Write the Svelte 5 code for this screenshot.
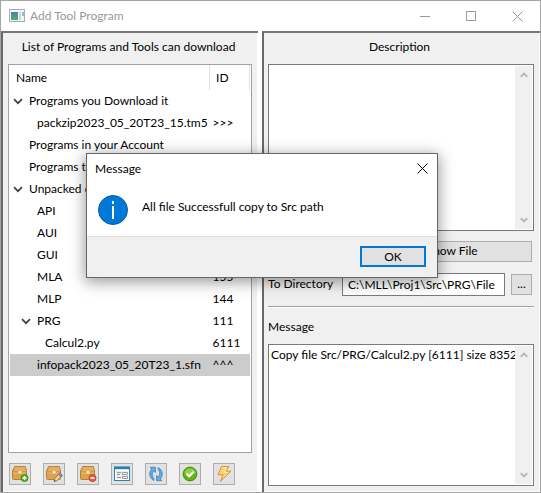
<script>
  const rows = [
    { name: 'Programs you Download it', id: '', level: 0, open: true },
    { name: 'packzip2023_05_20T23_15.tm5', id: '>>>', level: 1 },
    { name: 'Programs in your Account', id: '', level: 0 },
    { name: 'Programs to', id: '', level: 0 },
    { name: 'Unpacked on', id: '', level: 0, open: true },
    { name: 'API', id: '', level: 1 },
    { name: 'AUI', id: '', level: 1 },
    { name: 'GUI', id: '', level: 1 },
    { name: 'MLA', id: '155', level: 1 },
    { name: 'MLP', id: '144', level: 1 },
    { name: 'PRG', id: '111', level: 1, open: true },
    { name: 'Calcul2.py', id: '6111', level: 2 },
    { name: 'infopack2023_05_20T23_1.sfn', id: '^^^', level: 1, selected: true }
  ];
  const tools = ['add', 'edit', 'remove', 'form', 'refresh', 'accept', 'run'];
  const titles = {
    add: 'Add package', edit: 'Edit package', remove: 'Remove package', form: 'Properties',
    refresh: 'Refresh', accept: 'Accept', run: 'Run'
  };
  let description = $state('');
  let log = $state('Copy file Src/PRG/Calcul2.py [6111] size 8352');
  let directory = $state('C:\\MLL\\Proj1\\Src\\PRG\\File');
</script>

{#snippet scrollbar()}
  <div class="scroll" aria-hidden="true">
    <svg width="8" height="6" viewBox="0 0 8 6"><path d="M.8 4.8 4 1.6l3.2 3.2" /></svg>
    <svg width="8" height="6" viewBox="0 0 8 6"><path d="M.8 1.2 4 4.4l3.2-3.2" /></svg>
  </div>
{/snippet}

{#snippet box()}
  <path d="M3.6 1.5h10.8l1.1 4.6v7.4q0 1-1 1H2.5q-1 0-1-1V6.1z" fill="#dba34b" stroke="#b98036" />
  <path d="M4 2h10l1 4.5H3z" fill="#e2b064" />
  <path d="M2 7h13" stroke="#c08238" stroke-width=".8" />
  <path d="M2 8h13" stroke="#efc684" stroke-width=".8" />
  <path d="M7.5 6h3v2.5h-3z" fill="#fae5b5" />
{/snippet}

<main class="window">
  <header class="titlebar">
    <svg class="appicon" width="16" height="14" viewBox="0 0 16 14">
      <defs>
        <linearGradient id="pane" x1="0" y1="0" x2="0" y2="1">
          <stop offset="0" stop-color="#4a7fa8" /><stop offset="1" stop-color="#4fae6a" />
        </linearGradient>
      </defs>
      <rect x=".5" y=".5" width="15" height="12" fill="#f2f4f6" stroke="#a3adb5" />
      <rect x="2" y="3" width="7" height="8" fill="url(#pane)" />
      <rect x="10" y="3" width="2" height="8" fill="#c8d6df" />
      <rect x="13" y="3" width="2" height="4" fill="#9cc0ae" />
    </svg>
    <h1>Add Tool Program</h1>
    <div class="caption">
      <button aria-label="Minimize"><svg width="11" height="11" viewBox="0 0 11 11"><path d="M0 5.5h10" /></svg></button>
      <button aria-label="Maximize"><svg width="11" height="11" viewBox="0 0 11 11"><path d="M.5.5h9v9h-9z" /></svg></button>
      <button aria-label="Close"><svg width="11" height="11" viewBox="0 0 11 11"><path d="m.5.5 10 10m0-10-10 10" /></svg></button>
    </div>
  </header>

  <div class="panels">
    <section class="panel left">
      <h2>List of Programs and Tools can download</h2>
      <div class="tree">
        <table>
          <thead>
            <tr><th class="name">Name</th><th class="id">ID</th></tr>
          </thead>
          <tbody>
            {#each rows as row}
              <tr class:selected={row.selected}>
                <td>
                  <span class="node level{row.level}">
                    <span class="toggle">
                      {#if row.open}
                        <svg width="10" height="7" viewBox="0 0 10 7"><path d="m1 1.2 4 4 4-4" /></svg>
                      {/if}
                    </span>{row.name}
                  </span>
                </td>
                <td>{row.id}</td>
              </tr>
            {/each}
          </tbody>
        </table>
      </div>
      <div class="toolbar">
        {#each tools as tool}
          <button class="tool" aria-label={titles[tool]}>
            <svg width="18" height="18" viewBox="0 0 18 18" fill="none">
              {#if tool === 'add'}
                {@render box()}
                <circle cx="13.5" cy="13" r="3.5" fill="#5db51f" stroke="#3d8a12" />
                <path d="M13.5 11v4M11.5 13h4" stroke="#fff" stroke-width="1.3" />
              {:else if tool === 'edit'}
                {@render box()}
                <path d="m9 16.5.8-3.3 5-5.2 2.5 2.4-5.1 5.3z" fill="#f1cf7c" stroke="#8d6a4a" stroke-width=".8" />
                <path d="m13.4 9.4 1.4-1.4 2.5 2.4-1.4 1.5z" fill="#8c8fd0" stroke="#6469a8" stroke-width=".8" />
                <path d="m9 16.5.5-1.8 1.3 1.3z" fill="#444" />
              {:else if tool === 'remove'}
                {@render box()}
                <circle cx="13.5" cy="13" r="3.5" fill="#ea5a3f" stroke="#c8432f" />
                <path d="M11.5 13h4" stroke="#fff" stroke-width="1.6" />
              {:else if tool === 'form'}
                <rect x="1.5" y="2" width="15" height="13.5" fill="#fff" stroke="#2b83b5" />
                <path d="M1 3h16" stroke="#2182b8" stroke-width="2.4" />
                <rect x="3" y="6" width="12" height="8" fill="#ececec" />
                <path d="M4 7.5h4M4 9.5h3M4 12.5h4" stroke="#999" />
                <path d="M9.5 7.5h5v2h-5zm0 4h5v2h-5z" fill="#fff" stroke="#999" />
              {:else if tool === 'refresh'}
                <path d="M6.8 15.5C3.8 14 2.4 11 2.8 8c.2-1.8 1-3.1 2-4L3 2.3h5.4v5.2L6.7 5.8c-2 2.5-1.8 5.3.1 7.4z" fill="#65aee0" stroke="#357fb9" stroke-width=".8" />
                <path d="M11.2 2.5c3 1.5 4.4 4.5 4 7.5-.2 1.8-1 3.1-2 4l1.8 1.7H9.6v-5.2l1.7 1.7c2-2.5 1.8-5.3-.1-7.4z" fill="#65aee0" stroke="#357fb9" stroke-width=".8" />
              {:else if tool === 'accept'}
                <circle cx="9" cy="9" r="6.9" fill="#62b515" stroke="#438d10" />
                <path d="M3.4 8.2a5.7 5.7 0 0 1 11.2 0q-5.5 2-11.2 0z" fill="#8ed044" />
                <path d="m5.5 8.6 2.8 2.7 4.4-4.5" stroke="#fff" stroke-width="2.2" />
              {:else}
                <path d="M6.5 1.5h7.2L11 6.2h4.8L5.5 16.5 8 9.8H3z" fill="#fbd46e" stroke="#e0913a" />
                <path d="M7.5 2.8h4.2L9 7.3h3.5" stroke="#fff0b8" />
              {/if}
            </svg>
          </button>
        {/each}
      </div>
    </section>

    <section class="panel right">
      <h2><label for="description">Description</label></h2>
      <div class="field description">
        <textarea id="description" bind:value={description}></textarea>
        {@render scrollbar()}
      </div>
      <button class="push show">Show File</button>
      <div class="directory">
        <label for="directory">To Directory</label>
        <input id="directory" type="text" bind:value={directory} />
        <button class="push browse" aria-label="Browse">...</button>
      </div>
      <hr />
      <label class="caption-label" for="log">Message</label>
      <div class="field log">
        <textarea id="log" bind:value={log}></textarea>
        {@render scrollbar()}
      </div>
    </section>
  </div>

  <div class="dialog" role="dialog" aria-labelledby="dialog-title">
    <div class="dialog-top">
      <h2 id="dialog-title">Message</h2>
      <button aria-label="Close message"><svg width="11" height="11" viewBox="0 0 11 11"><path d="m.5.5 10 10m0-10-10 10" /></svg></button>
    </div>
    <div class="dialog-body">
      <svg width="30" height="30" viewBox="0 0 30 30">
        <circle cx="15" cy="15" r="14.5" fill="#0078d7" stroke="#0a5ba3" />
        <path d="M14 6h2v3h-2zM14 11h2v13h-2z" fill="#fff" />
      </svg>
      <p>All file Successfull copy to Src path</p>
    </div>
    <div class="dialog-foot"><button class="push ok">OK</button></div>
  </div>
</main>

<style>
  :global(body) { margin: 0; }
  .window, .window * { box-sizing: border-box; }
  .window {
    position: relative;
    display: flex;
    flex-direction: column;
    min-height: 100vh;
    border: 1px solid #a5a5a5;
    background: #fff;
    color: #000;
    font: 12px/16px Lato, "Open Sans", sans-serif;
  }
  button, input, textarea { font: inherit; color: inherit; margin: 0; }
  h1, h2, p { margin: 0; font: inherit; }
  .titlebar { display: flex; align-items: center; height: 30px; padding-left: 8px; color: #999; }
  .appicon { margin-right: 5px; }
  .caption { display: flex; margin-left: auto; }
  .caption button { width: 46px; height: 28px; padding: 0; border: 0; background: none; }
  .caption svg { display: block; margin: 0 auto; }
  .caption path { fill: none; stroke: #999; }
  .panels { flex: 1; display: flex; gap: 4px; background: #fff; }
  .panel {
    display: flex;
    flex-direction: column;
    min-width: 0;
    background: #f0f0f0;
    border: solid #696969;
    border-width: 2px 0 0 2px;
    border-top-color: #777;
    box-shadow: inset -1px -1px #fff;
  }
  .left { flex: 256; padding: 5px 6px 7px 5px; }
  .right { flex: 279; padding: 5px 6px 6px 4px; }
  .panel h2 { height: 26px; padding-right: 3px; line-height: 17px; text-align: center; }
  .tree { flex: 1; border: 1px solid #a0a0a8; background: #fff; padding: 0 1px; }
  table { width: 100%; border-collapse: collapse; table-layout: fixed; }
  th { height: 25px; padding: 0 0 0 6px; font-weight: normal; text-align: left; border-right: 1px solid #e0e0e0; }
  th.id { width: 40px; }
  td { height: 22px; padding: 0 0 0 3px; white-space: nowrap; }
  .selected { background: #ccc; }
  .node { display: flex; align-items: center; }
  .toggle { display: flex; width: 16px; }
  .toggle path { fill: none; stroke: #404040; stroke-width: 1.7; }
  .level1 { padding-left: 8px; }
  .level2 { padding-left: 16px; }
  .toolbar { display: flex; gap: 12px; padding: 10px 1px 0; }
  .tool { width: 22px; height: 22px; padding: 1px; border: 1px solid #adadad; background: #e1e1e1; }
  .tool svg { display: block; }
  .field { display: flex; border: 1px solid #7a7a7a; background: #fff; padding: 1px; }
  .description { flex: 167; }
  .log { flex: 142; }
  textarea { flex: 1; min-width: 0; border: 0; padding: 1px; resize: none; overflow: hidden; background: none; white-space: nowrap; outline: 0; }
  .scroll { display: flex; flex-direction: column; justify-content: space-between; align-items: center; width: 17px; padding: 6px 0; background: #f0f0f0; }
  .scroll path { fill: none; stroke: #b8b8b8; stroke-width: 2; }
  .push { padding: 0; border: 1px solid #adadad; background: #e1e1e1; text-align: center; }
  .show { align-self: flex-end; width: 60%; height: 21px; margin: 10px 2px 0 0; line-height: 18px; }
  .directory { display: flex; align-items: center; margin: 11px 2px 0 0; }
  .directory label { width: 74px; }
  .directory input { flex: 1; min-width: 0; height: 23px; padding: 0 5px; border: 1px solid #7a7a7a; border-radius: 0; background: #fff; }
  .browse { width: 21px; height: 21px; margin-left: 6px; }
  hr { width: 100%; height: 2px; margin: 10px 0; border: 0; border-top: 1px solid #a0a0a0; border-bottom: 1px solid #fff; }
  .caption-label { height: 26px; line-height: 17px; }
  .dialog {
    position: absolute;
    left: 85px;
    top: 152px;
    width: 352px;
    border: 1px solid #666;
    background: #fff;
    box-shadow: 0 3px 14px 1px rgba(0, 0, 0, .4);
  }
  .dialog-top { display: flex; justify-content: space-between; height: 30px; padding-left: 8px; line-height: 29px; }
  .dialog-top button { width: 30px; height: 28px; padding: 0; border: 0; background: none; }
  .dialog-top svg { display: block; margin: 0 auto; }
  .dialog-top path { stroke: #000; fill: none; }
  .dialog-body { display: flex; gap: 14px; height: 52px; padding: 11px 11px 0; }
  .dialog-body p { padding-top: 4px; }
  .dialog-foot { display: flex; justify-content: flex-end; height: 41px; padding: 9px 11px 0; border-top: 1px solid #dfdfdf; background: #f0f0f0; }
  .ok { width: 66px; height: 21px; border: 2px solid #0078d7; }
</style>
